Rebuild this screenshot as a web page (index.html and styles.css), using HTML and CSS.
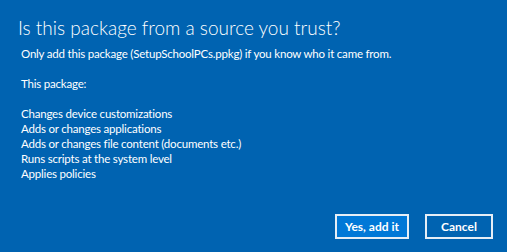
FILE: index.html
```html
<!DOCTYPE html>
<html>
<head>
<meta charset="utf-8">
<link rel="stylesheet" href="styles.css">
</head>
<body>
<div class="dialog">
  <h1 class="title">Is this package from a source you trust?</h1>
  <div class="content">
    <p class="line">Only add this package (SetupSchoolPCs.ppkg) if you know who it came from.</p>
    <p class="line blank">&nbsp;</p>
    <p class="line">This package:</p>
    <p class="line blank">&nbsp;</p>
    <ul class="list">
      <li>Changes device customizations</li>
      <li>Adds or changes applications</li>
      <li>Adds or changes file content (documents etc.)</li>
      <li>Runs scripts at the system level</li>
      <li>Applies policies</li>
    </ul>
  </div>
  <div class="actions">
    <button class="btn primary">Yes, add it</button>
    <button class="btn">Cancel</button>
  </div>
</div>
</body>
</html>
```
FILE: styles.css
```css
html, body {
  margin: 0;
  padding: 0;
  height: 100%;
  background: #0063b1;
}
.dialog {
  height: 252px;
  box-sizing: border-box;
  display: flex;
  flex-direction: column;
  padding: 14px 14px 13px 21px;
  color: #fff;
  font-family: "Lato", sans-serif;
}
.title {
  margin: 0 0 0 -3px;
  font-size: 19px;
  font-weight: 300;
  letter-spacing: 0;
  line-height: 28px;
}
.content {
  flex: 1;
  font-size: 11.5px;
  letter-spacing: -0.2px;
  line-height: 15px;
  margin-top: 4px;
}
.line {
  margin: 0;
}
.list {
  list-style: none;
  margin: 0;
  padding: 0;
}
.actions {
  display: flex;
  justify-content: flex-end;
  gap: 16px;
}
.btn {
  height: 25px;
  box-sizing: border-box;
  border: 2px solid #e6eef6;
  background: #0063b1;
  color: #fff;
  font-family: "Lato", sans-serif;
  font-size: 12px;
  font-weight: 700;
  padding: 0;
  width: 68px;
}
.btn.primary {
  background: #0078d7;
  width: 74px;
}
```
